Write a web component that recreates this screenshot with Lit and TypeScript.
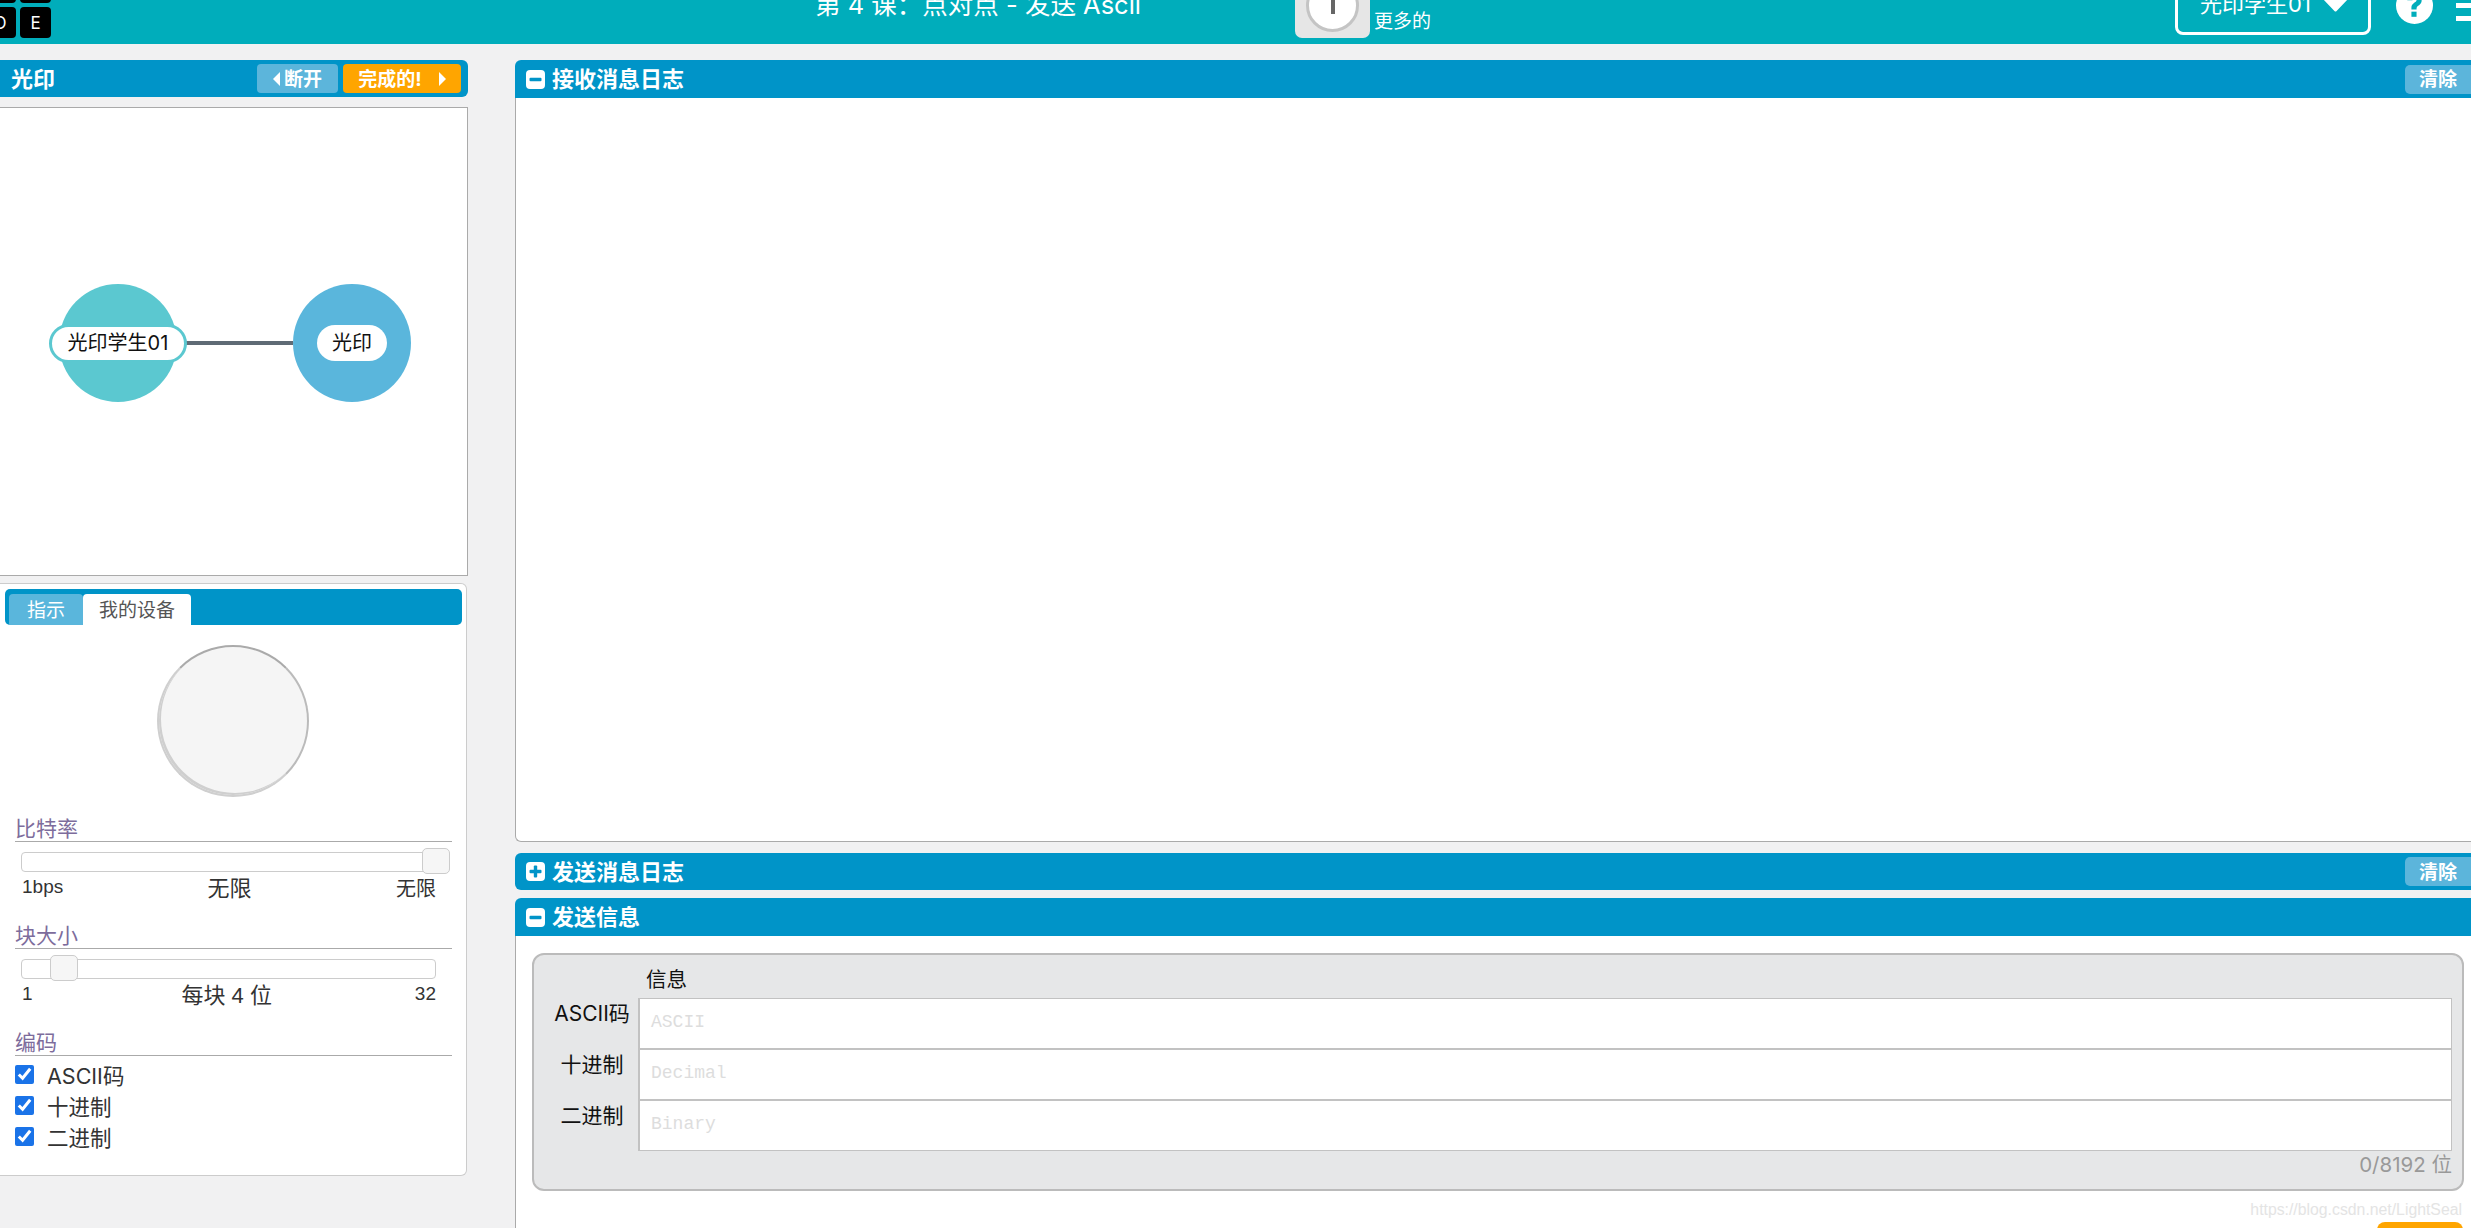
import { LitElement, html, css, unsafeCSS } from "lit";
import { customElement } from "lit/decorators.js";

const FONT = unsafeCSS(`Inter, "Noto Sans CJK SC", sans-serif`);
const ARIAL = unsafeCSS(`"Liberation Sans", "Noto Sans CJK SC", sans-serif`);

const minus = html`<svg class="pico" viewBox="0 0 19 19"><rect width="19" height="19" rx="4" fill="#fff"/><rect x="3.5" y="7.8" width="12" height="3.4" rx="1" fill="#0094c8"/></svg>`;
const plus = html`<svg class="pico" viewBox="0 0 19 19"><rect width="19" height="19" rx="4" fill="#fff"/><rect x="3.5" y="7.8" width="12" height="3.4" rx="1" fill="#0094c8"/><rect x="7.8" y="3.5" width="3.4" height="12" rx="1" fill="#0094c8"/></svg>`;

@customElement("app-root")
export class AppRoot extends LitElement {
  static styles = css`
    :host { display: block; width: 2471px; height: 1228px; overflow: hidden; background: #f1f1f2; font-family: ${FONT}; color: #222; }
    * { box-sizing: border-box; }

    .top { height: 44px; background: #00adbb; overflow: hidden; display: flex; align-items: flex-end; }
    .logo { width: 66px; flex: none; display: flex; gap: 4px; margin-left: -15px; margin-bottom: 6px; }
    .tile { width: 31px; height: 31px; flex: none; background: #000; color: #fff; border-radius: 4px; font-size: 17px; display: flex; align-items: center; justify-content: center; position: relative; }
    .tile::before { content: ""; position: absolute; left: 0; right: 0; top: -35px; height: 31px; background: #000; border-radius: 4px; }
    .title { margin-left: 764px; margin-bottom: 25px; color: #fff; font-size: 25.5px; line-height: 28px; white-space: nowrap; width: 480px; flex: none; }
    .more-btn { flex: none; width: 75px; height: 60px; background: #e6e6e6; border-radius: 0 0 7px 7px; margin-bottom: 6px; display: flex; align-items: flex-end; justify-content: center; padding-bottom: 6px; }
    .knob { width: 53px; height: 53px; flex: none; border-radius: 50%; background: #fff; border: 3px solid #c4c4c4; display: flex; justify-content: center; align-items: flex-start; padding-top: 10px; }
    .knob i { display: block; width: 4px; height: 22px; background: #666; }
    .more { margin-left: 4px; margin-bottom: 10px; color: #fff; font-size: 19px; line-height: 24px; width: 801px; flex: none; }
    .user { flex: none; width: 196px; height: 60px; border: 3px solid #fff; border-radius: 0 0 8px 8px; margin-bottom: 9px; color: #fff; font-size: 22px; display: flex; align-items: flex-end; padding: 0 0 14px 22px; gap: 12px; line-height: 28px; white-space: nowrap; }
    .user span { width: 111px; flex: none; }
    .user svg { width: 25px; height: 15px; flex: none; margin-bottom: 6px; }
    .help { flex: none; margin-left: 25px; margin-bottom: 20px; width: 37px; height: 37px; }
    .burger { flex: none; margin-left: 23px; margin-bottom: 23px; width: 15px; display: flex; flex-direction: column; gap: 8px; }
    .burger i { display: block; height: 5px; width: 15px; background: #fff; }

    .main { display: flex; align-items: flex-start; padding-top: 16px; gap: 46px; }
    .left { width: 469px; flex: none; display: flex; flex-direction: column; }
    .right { width: 1956px; flex: none; height: 1168px; display: flex; flex-direction: column; }

    .bar { height: 37px; background: #0094c8; color: #fff; font-weight: 700; display: flex; align-items: center; font-size: 22px; flex: none; }
    .name { flex: 1; padding-bottom: 4px; }
    .lbar { border-radius: 0 6px 6px 0; padding: 0 7px 0 11px; width: 468px; }
    .btn { height: 29px; border-radius: 4px; font-size: 19px; font-weight: 700; color: #fff; display: flex; align-items: center; justify-content: center; gap: 4px; white-space: nowrap; }
    .btn b { font-weight: 700; padding-bottom: 3px; }
    .off { width: 81px; background: #5cb5db; margin-right: 5px; }
    .done { width: 118px; background: #ffa500; gap: 17px; }
    .tri-l { width: 0; height: 0; border: 7px solid transparent; border-left: 0; border-right: 7px solid #fff; }
    .tri-r { width: 0; height: 0; border: 7px solid transparent; border-right: 0; border-left: 7px solid #fff; }

    .diagram { width: 468px; height: 469px; margin-top: 10px; background: #fff; border: 1px solid #aaa; border-left: 0; }
    .diagram svg { display: block; width: 467px; height: 467px; }
    .diagram text { font-family: ${FONT}; font-size: 20px; fill: #111; text-anchor: middle; }

    .device { width: 467px; height: 593px; margin-top: 7px; background: #fff; border: 1px solid #ccc; border-left: 0; border-radius: 0 6px 6px 0; padding: 5px 5px 0 5px; }
    .tabs { height: 36px; background: #0094c8; border-radius: 5px; display: flex; align-items: flex-end; padding-left: 4px; width: 457px; }
    .tab { height: 31px; font-size: 19px; display: flex; align-items: center; justify-content: center; border-radius: 4px 4px 0 0; padding-bottom: 3px; }
    .t1 { width: 74px; background: #5ab6dc; color: #fff; }
    .t2 { width: 108px; background: #fff; color: #555; }
    .dial { width: 152px; height: 152px; border-radius: 50%; background: #f5f5f5; border: 2px solid; border-color: #aaa #bbb #cfcfcf #cfcfcf; box-shadow: inset 2px -2px 0 #cfcfcf; margin: 20px 0 0 152px; }

    .sec { margin-left: 10px; width: 437px; display: flex; flex-direction: column; }
    .sec h4 { margin: 0; font-weight: 400; font-size: 21px; line-height: 26px; height: 26px; color: #7d6c9c; border-bottom: 1px solid #aaa; }
    .s1 { margin-top: 19px; }
    .s2, .s3 { margin-top: 22px; }
    .track { margin: 10px 0 0 6px; height: 20px; background: #fff; border: 1px solid #ccc; border-radius: 4px; position: relative; }
    .w1 { width: 429px; }
    .w2 { width: 415px; }
    .handle { position: absolute; top: -5px; height: 26px; width: 28px; background: #f6f6f6; border: 1px solid #ccc; border-radius: 5px; }
    .h1 { right: -1px; }
    .h2 { left: 28px; }
    .vals { display: flex; justify-content: space-between; align-items: center; margin: 1px 0 0 7px; width: 414px; height: 28px; font-family: ${ARIAL}; font-size: 19px; color: #333; }
    .vals .mid { font-size: 22px; padding-bottom: 3px; }
    .vals .end { font-size: 20px; }
    .vals2 .mid { margin-left: 6px; }
    .checks { display: flex; flex-direction: column; gap: 11px; margin-top: 8px; }
    .check { display: flex; align-items: center; height: 20px; font-size: 21.5px; color: #333; }
    .check input { width: 19px; height: 19px; margin: 0 13px 0 0; accent-color: #1a73e8; }

    .log { flex: none; height: 782px; display: flex; flex-direction: column; }
    .rbar { border-radius: 6px 0 0 0; padding-left: 11px; height: 38px; gap: 7px; }
    .pico { width: 19px; height: 19px; flex: none; }
    .clear { width: 66px; background: #5cb5db; border-radius: 5px 0 0 5px; }
    .logbody { flex: 1; background: #fff; border: 1px solid #aaa; border-top: 0; border-right: 0; border-radius: 0 0 0 6px; }
    .sendlog { margin-top: 11px; border-radius: 6px 0 0 6px; height: 37px; }
    .send { margin-top: 8px; flex: 1; display: flex; flex-direction: column; }
    .sendbody { flex: 1; background: #fff; border-left: 1px solid #aaa; padding: 17px 7px 0 16px; position: relative; }
    .box { height: 238px; background: #e6e7e8; border: 2px solid #bbb; border-radius: 12px; display: grid; grid-template-columns: 104px 1814px; grid-template-rows: 43px 51px 51px 51px 1fr; }
    .hd { grid-column: 2; font-size: 20.5px; color: #111; padding: 12px 0 0 8px; line-height: 26px; }
    .lab { font-size: 21px; color: #111; text-align: center; padding: 3px 0 0 12px; line-height: 26px; white-space: nowrap; }
    .inp { background: #fff; border: 1px solid #c2c2c2; border-left-width: 2px; font-family: "Liberation Mono", monospace; font-size: 18px; color: #ddd; padding: 11px 0 0 11px; line-height: 24px; }
    .count { grid-column: 2; text-align: right; font-size: 20.5px; color: #999; line-height: 26px; padding-top: 1px; }
    .mark { position: absolute; right: 9px; top: 262px; font-family: "Liberation Sans", sans-serif; font-size: 15.8px; line-height: 24px; color: #e4e4e4; white-space: nowrap; }
    .orange { position: absolute; left: 1861px; top: 286px; width: 86px; height: 10px; background: #ffa500; border-radius: 8px 8px 0 0; }
  `;

  render() {
    return html`
      <div class="top">
        <div class="logo">
          <div class="tile">D</div>
          <div class="tile">E</div>
        </div>
        <div class="title">第 4 课：点对点 - 发送 Ascii</div>
        <div class="more-btn"><div class="knob"><i></i></div></div>
        <div class="more">更多的</div>
        <div class="user"><span>光印学生01</span>
          <svg viewBox="0 0 25 15"><path d="M2 2h21L12.5 13z" fill="#fff" stroke="#fff" stroke-width="3" stroke-linejoin="round"/></svg>
        </div>
        <svg class="help" viewBox="0 0 36 36"><circle cx="18" cy="18" r="18" fill="#fff"/><path d="M11 13c0-4 3-6 7-6s7 2 7 6c0 5-5 5-5 8v1h-5v-2c0-4 5-5 5-7 0-1-1-2-2-2s-2 1-2 2z" fill="#00adbb"/><rect x="15" y="24" width="5" height="5" fill="#00adbb"/></svg>
        <div class="burger"><i></i><i></i></div>
      </div>

      <div class="main">
        <div class="left">
          <div class="bar lbar">
            <span class="name">光印</span>
            <div class="btn off"><span class="tri-l"></span><b>断开</b></div>
            <div class="btn done"><b>完成的!</b><span class="tri-r"></span></div>
          </div>
          <div class="diagram">
            <svg viewBox="0 0 467 467">
              <line x1="186" y1="235" x2="293" y2="235" stroke="#5f6b75" stroke-width="4"/>
              <circle cx="118" cy="235" r="59" fill="#5bc8d0"/>
              <circle cx="352" cy="235" r="59" fill="#5ab6dc"/>
              <rect x="50.5" y="217.5" width="135" height="36" rx="18" fill="#fff" stroke="#5bc8d0" stroke-width="3"/>
              <rect x="317" y="217" width="70" height="36" rx="18" fill="#fff"/>
              <text x="118" y="242">光印学生01</text>
              <text x="352" y="242">光印</text>
            </svg>
          </div>
          <div class="device">
            <div class="tabs">
              <div class="tab t1">指示</div>
              <div class="tab t2">我的设备</div>
            </div>
            <div class="dial"></div>
            <div class="sec s1">
              <h4>比特率</h4>
              <div class="track w1"><div class="handle h1"></div></div>
              <div class="vals"><span>1bps</span><span class="mid">无限</span><span class="end">无限</span></div>
            </div>
            <div class="sec s2">
              <h4>块大小</h4>
              <div class="track w2"><div class="handle h2"></div></div>
              <div class="vals vals2"><span>1</span><span class="mid">每块 4 位</span><span>32</span></div>
            </div>
            <div class="sec s3">
              <h4>编码</h4>
              <div class="checks">
                <label class="check"><input type="checkbox" checked />ASCII码</label>
                <label class="check"><input type="checkbox" checked />十进制</label>
                <label class="check"><input type="checkbox" checked />二进制</label>
              </div>
            </div>
          </div>
        </div>

        <div class="right">
          <div class="log">
            <div class="bar rbar">${minus}<span class="name">接收消息日志</span><div class="btn clear"><b>清除</b></div></div>
            <div class="logbody"></div>
          </div>
          <div class="bar rbar sendlog">${plus}<span class="name">发送消息日志</span><div class="btn clear"><b>清除</b></div></div>
          <div class="send">
            <div class="bar rbar">${minus}<span class="name">发送信息</span></div>
            <div class="sendbody">
              <div class="box">
                <div class="hd">信息</div>
                <div class="lab">ASCII码</div><div class="inp">ASCII</div>
                <div class="lab">十进制</div><div class="inp">Decimal</div>
                <div class="lab">二进制</div><div class="inp">Binary</div>
                <div class="count">0/8192 位</div>
              </div>
              <div class="mark">https://blog.csdn.net/LightSeal</div>
              <div class="orange"></div>
            </div>
          </div>
        </div>
      </div>
    `;
  }
}
